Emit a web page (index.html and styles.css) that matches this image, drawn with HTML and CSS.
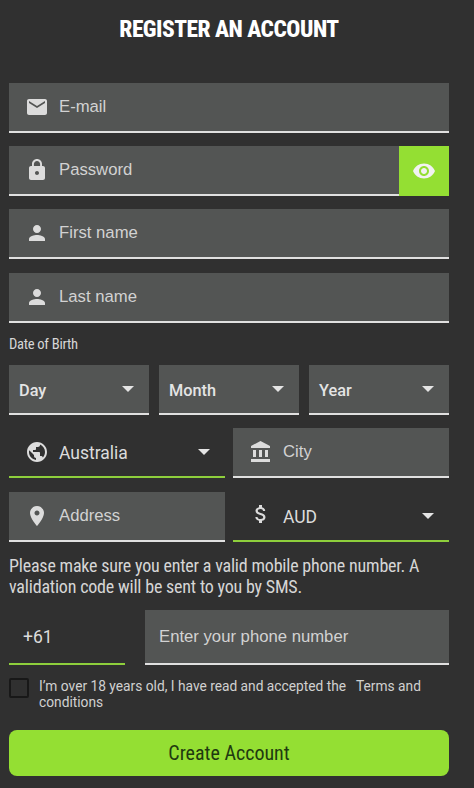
FILE: index.html
```html
<!DOCTYPE html>
<html lang="en">
<head>
  <meta charset="UTF-8">
  <title>Register an account</title>
  <link rel="stylesheet" href="styles.css">
</head>
<body>

<h1 class="title">REGISTER AN ACCOUNT</h1>

<form class="form">
  <label class="field">
    <svg class="icon" viewBox="0 0 24 24"><path d="M20 4H4c-1.1 0-1.99.9-1.99 2L2 18c0 1.1.9 2 2 2h16c1.1 0 2-.9 2-2V6c0-1.1-.9-2-2-2zm0 4l-8 5-8-5V6l8 5 8-5v2z"/></svg>
    <input type="email" placeholder="E-mail">
  </label>

  <label class="field">
    <svg class="icon" viewBox="0 0 24 24"><path d="M18 8h-1V6c0-2.76-2.24-5-5-5S7 3.24 7 6v2H6c-1.1 0-2 .9-2 2v10c0 1.1.9 2 2 2h12c1.1 0 2-.9 2-2V10c0-1.1-.9-2-2-2zm-6 9c-1.1 0-2-.9-2-2s.9-2 2-2 2 .9 2 2-.9 2-2 2zm3.1-9H8.9V6c0-1.71 1.39-3.1 3.1-3.1 1.71 0 3.1 1.39 3.1 3.1v2z"/></svg>
    <input type="password" placeholder="Password">
    <button type="button" class="eye">
      <svg class="icon" viewBox="0 0 24 24"><path d="M12 4.5C7 4.5 2.73 7.61 1 12c1.73 4.39 6 7.5 11 7.5s9.27-3.11 11-7.5c-1.73-4.39-6-7.5-11-7.5zM12 17c-2.76 0-5-2.24-5-5s2.24-5 5-5 5 2.24 5 5-2.24 5-5 5zm0-8c-1.66 0-3 1.34-3 3s1.34 3 3 3 3-1.34 3-3-1.34-3-3-3z"/></svg>
    </button>
  </label>

  <label class="field">
    <svg class="icon" viewBox="0 0 24 24"><path d="M12 12c2.21 0 4-1.79 4-4s-1.79-4-4-4-4 1.79-4 4 1.79 4 4 4zm0 2c-2.67 0-8 1.34-8 4v2h16v-2c0-2.66-5.33-4-8-4z"/></svg>
    <input type="text" placeholder="First name">
  </label>

  <label class="field last-name">
    <svg class="icon" viewBox="0 0 24 24"><path d="M12 12c2.21 0 4-1.79 4-4s-1.79-4-4-4-4 1.79-4 4 1.79 4 4 4zm0 2c-2.67 0-8 1.34-8 4v2h16v-2c0-2.66-5.33-4-8-4z"/></svg>
    <input type="text" placeholder="Last name">
  </label>

  <div class="dob-label">Date of Birth</div>

  <div class="dob">
    <div class="field"><span class="value">Day</span><i class="caret"></i></div>
    <div class="field"><span class="value">Month</span><i class="caret"></i></div>
    <div class="field"><span class="value">Year</span><i class="caret"></i></div>
  </div>

  <div class="pair">
    <div class="field picked">
      <svg class="icon" viewBox="0 0 24 24"><path d="M12 2C6.48 2 2 6.48 2 12s4.48 10 10 10 10-4.48 10-10S17.52 2 12 2zm-1 17.93c-3.95-.49-7-3.85-7-7.93 0-.62.08-1.21.21-1.79L9 15v1c0 1.1.9 2 2 2v1.93zm6.9-2.54c-.26-.81-1-1.39-1.9-1.39h-1v-3c0-.55-.45-1-1-1H8v-2h2c.55 0 1-.45 1-1V7h2c1.1 0 2-.9 2-2v-.41c2.93 1.19 5 4.06 5 7.41 0 2.08-.8 3.97-2.1 5.39z"/></svg>
      <span class="value">Australia</span><i class="caret"></i>
    </div>
    <label class="field">
      <svg class="icon" viewBox="0 0 24 24"><path d="M4 10v7h3v-7H4zm6 0v7h3v-7h-3zM2 22h19v-3H2v3zm14-12v7h3v-7h-3zm-4.5-9L2 6v2h19V6l-9.5-5z"/></svg>
      <input type="text" placeholder="City">
    </label>
  </div>

  <div class="pair">
    <label class="field">
      <svg class="icon" viewBox="0 0 24 24"><path d="M12 2C8.13 2 5 5.13 5 9c0 5.25 7 13 7 13s7-7.75 7-13c0-3.87-3.13-7-7-7zm0 9.5c-1.38 0-2.5-1.12-2.5-2.5s1.12-2.5 2.5-2.5 2.5 1.12 2.5 2.5-1.12 2.5-2.5 2.5z"/></svg>
      <input type="text" placeholder="Address">
    </label>
    <div class="field picked">
      <svg class="icon dollar" viewBox="0 0 24 24"><path d="M11.8 10.9c-2.27-.59-3-1.2-3-2.15 0-1.09 1.01-1.85 2.7-1.85 1.78 0 2.44.85 2.5 2.1h2.21c-.07-1.72-1.12-3.3-3.21-3.81V3h-3v2.16c-1.94.42-3.5 1.68-3.5 3.61 0 2.31 1.91 3.46 4.7 4.13 2.5.6 3 1.48 3 2.41 0 .69-.49 1.79-2.7 1.79-2.06 0-2.87-.92-2.98-2.1h-2.2c.12 2.19 1.76 3.42 3.68 3.83V21h3v-2.15c1.95-.37 3.5-1.5 3.5-3.55 0-2.84-2.43-3.81-4.7-4.4z"/></svg>
      <span class="value">AUD</span><i class="caret"></i>
    </div>
  </div>

  <p class="note">Please make sure you enter a valid mobile phone number. A validation code will be sent to you by SMS.</p>

  <div class="phone">
    <div class="field picked prefix"><span class="code">+61</span></div>
    <label class="field number"><input type="tel" placeholder="Enter your phone number"></label>
  </div>

  <label class="terms">
    <span class="box"></span>
    <span>I’m over 18 years old, I have read and accepted the &nbsp; Terms and conditions</span>
  </label>

  <button type="button" class="submit">Create Account</button>
</form>

</body>
</html>
```

FILE: styles.css
```css
body {
  margin: 0;
  padding: 0 25px 0 9px;
  background-color: #303030;
  color: #d6d6d6;
  font-family: Roboto, sans-serif;
}

.title {
  margin: 0;
  padding-top: 14px;
  height: 83px;
  box-sizing: border-box;
  font-size: 23.4px;
  line-height: 30px;
  font-weight: 800;
  font-stretch: 75%;
  letter-spacing: -0.5px;
  text-align: center;
  color: #fff;
}

.form {
  display: flex;
  flex-direction: column;
}

/* Fields */
.field {
  display: flex;
  align-items: center;
  height: 50px;
  box-sizing: border-box;
  margin-bottom: 13px;
  background-color: #535554;
  border-bottom: 2px solid #e0e0e0;
}

.last-name {
  margin-top: 1px;
}

.field input {
  flex: 1;
  min-width: 0;
  height: 100%;
  padding: 0;
  border: none;
  outline: none;
  background: none;
  color: #d6d6d6;
  font-family: "Liberation Sans", Arial, sans-serif;
  font-size: 16.7px;
}

.field input::placeholder {
  color: #d2d2d2;
  opacity: 1;
}

.icon {
  flex: none;
  width: 24px;
  height: 24px;
  margin: 0 10px 0 16px;
  fill: #dcdcdc;
}

.dollar {
  margin-bottom: 5px;
}

.eye {
  flex: none;
  width: 50px;
  height: 50px;
  margin-bottom: -2px;
  padding: 0;
  border: none;
  background-color: #94df33;
}

.eye .icon {
  display: block;
  margin: 0 auto;
  fill: #f2f2f2;
}

.value {
  flex: 1;
  padding-top: 2px;
  font-size: 17.5px;
  color: #dcdcdc;
}

.code {
  font-size: 17.5px;
  color: #dcdcdc;
}

.caret {
  flex: none;
  width: 0;
  height: 0;
  margin-right: 15px;
  border-left: 6px solid transparent;
  border-right: 6px solid transparent;
  border-top: 6px solid #e4e4e4;
}

.picked {
  background: none;
  border-bottom-color: #8ecf3c;
}

/* Date of birth */
.dob-label {
  height: 29px;
  font-size: 14.6px;
  line-height: 16px;
  font-stretch: 75%;
  letter-spacing: -0.3px;
  color: #d6d6d6;
}

.dob,
.pair,
.phone {
  display: flex;
}

.dob {
  gap: 10px;
}

.dob .field {
  flex: 1;
  padding-left: 10px;
}

.dob .value {
  font-size: 16.3px;
  font-weight: 500;
  color: #e4e4e4;
}

.pair {
  gap: 8px;
}

.pair + .pair {
  margin-top: 1px;
}

.pair .field {
  flex: 1;
  min-width: 0;
}

.note {
  margin: 0 0 13px;
  font-size: 18px;
  line-height: 21px;
  font-stretch: 75%;
  letter-spacing: -0.2px;
  color: #d6d6d6;
}

/* Phone */
.phone {
  gap: 20px;
}

.phone .field {
  height: 55px;
}

.prefix {
  flex: none;
  width: 116px;
  padding-left: 14px;
}

.number {
  flex: 1;
  padding-left: 14px;
}

/* Terms */
.terms {
  display: flex;
  gap: 10px;
  font-size: 13.75px;
  line-height: 16px;
  color: #d0d0d0;
}

.box {
  flex: none;
  width: 20px;
  height: 20px;
  box-sizing: border-box;
  border: 2px solid #181818;
  border-radius: 2px;
}

.submit {
  height: 46px;
  margin-top: 20px;
  border: none;
  border-radius: 8px;
  background-color: #94df33;
  color: #1f3a10;
  font-family: Roboto, sans-serif;
  font-size: 20px;
  font-stretch: 75%;
}
```
